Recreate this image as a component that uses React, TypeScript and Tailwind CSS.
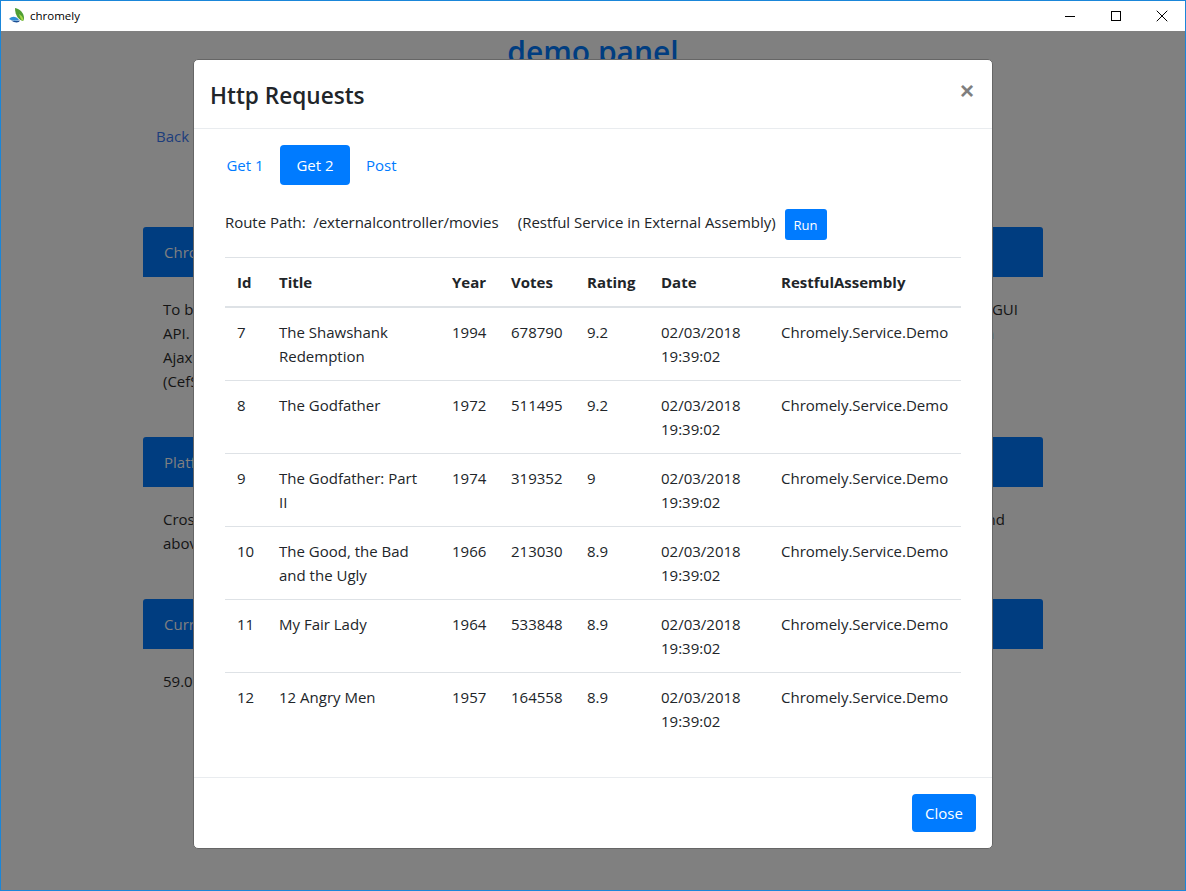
import { X } from "lucide-react";

const font = "font-['Open_Sans',sans-serif]";

const movies = [
  { id: 7, title: ["The Shawshank", "Redemption"], year: 1994, votes: 678790, rating: "9.2" },
  { id: 8, title: ["The Godfather"], year: 1972, votes: 511495, rating: "9.2" },
  { id: 9, title: ["The Godfather: Part", "II"], year: 1974, votes: 319352, rating: "9" },
  { id: 10, title: ["The Good, the Bad", "and the Ugly"], year: 1966, votes: 213030, rating: "8.9" },
  { id: 11, title: ["My Fair Lady"], year: 1964, votes: 533848, rating: "8.9" },
  { id: 12, title: ["12 Angry Men"], year: 1957, votes: 164558, rating: "8.9" },
];

function Logo() {
  return (
    <svg width="16" height="16" viewBox="0 0 16 16" className="shrink-0">
      <path d="M6 0 C11 1 15 5 15 10 C15 12 14 13 14 13 C10 12 6 8 6 0 Z" fill="#4f9e33" />
      <path d="M10 6 C13 8 15 10 14 13 C12 12 11 9 10 6 Z" fill="#a5d84a" />
      <path d="M0 11 C3 8 7 8 10 12 C7 13 3 13 0 11 Z" fill="#2f8fd8" />
      <path d="M2 12.5 C5 13 8 13 11 12.5 C10 15 6 15 2 12.5 Z" fill="#1c4f94" />
    </svg>
  );
}

function TitleBar() {
  return (
    <div className="flex h-[30px] items-center justify-between bg-white">
      <div className="flex items-center gap-[5px] pl-2">
        <Logo />
        <span className="font-['Open_Sans',sans-serif] text-[11.5px] text-black">chromely</span>
      </div>
      <div className="flex">
        <div className="flex h-[30px] w-[46px] items-center justify-center">
          <div className="h-px w-[10px] bg-black" />
        </div>
        <div className="flex h-[30px] w-[46px] items-center justify-center">
          <div className="h-[10px] w-[10px] border border-black" />
        </div>
        <div className="flex h-[30px] w-[46px] items-center justify-center">
          <X size={20} strokeWidth={1} color="#000" absoluteStrokeWidth />
        </div>
      </div>
    </div>
  );
}

type Line = { left: string; right: string; pr: string };

function Card({ title, lines, className }: { title: string; lines: Line[]; className: string }) {
  return (
    <div className={className}>
      <div className="flex h-[50px] items-center rounded-t-[3px] bg-[#003d80] pl-[21px] text-[15px] text-[#808080]">{title}</div>
      <div className="px-[20px] pt-[20px] text-[15px] leading-[24px] text-[#141414]">
        {lines.map((l) => (
          <div key={l.left} className={`flex justify-between ${l.pr}`}>
            <span>{l.left}</span>
            <span>{l.right}</span>
          </div>
        ))}
      </div>
    </div>
  );
}

function Page() {
  return (
    <div className={`h-[859px] overflow-hidden bg-[#808080] ${font}`}>
      <div className="mx-auto w-[900px]">
        <h1 className="pt-[1px] text-center text-[30px] font-semibold leading-[40px] text-[#003d80]">demo panel</h1>
        <a className="mt-[52px] block pl-[13px] text-[15px] leading-[24px] text-[#1c3d7c]">Back</a>
        <Card
          className="mt-[79px]"
          title="Chromely"
          lines={[
            { left: "To build", right: "GUI", pr: "pr-[5px]" },
            { left: "API.", right: "a", pr: "pr-[29px]" },
            { left: "Ajax", right: "", pr: "" },
            { left: "(CefSharp)", right: "", pr: "" },
          ]}
        />
        <Card
          className="mt-[44px]"
          title="Platforms"
          lines={[
            { left: "Cross", right: "nd", pr: "pr-[18px]" },
            { left: "above", right: "", pr: "" },
          ]}
        />
        <Card className="mt-[44px]" title="Current" lines={[{ left: "59.0.2", right: "", pr: "" }]} />
      </div>
    </div>
  );
}

function Modal() {
  const th = "border-b-2 border-[#dee2e6] px-3 pt-[12px] pb-[11px] text-left align-top font-bold";
  const td = "px-3 pt-[12px] pb-[12px] align-top";
  return (
    <div className={`w-[800px] rounded-[5px] border border-[#666666] bg-white text-[#212529] ${font}`}>
      <div className="flex h-[69px] items-start justify-between border-b border-[#e9ecef] pl-[16px] pr-[18px]">
        <h5 className="pt-[19px] text-[22.6px] font-semibold leading-[34px]">Http Requests</h5>
        <span className="pt-[13px] font-['Liberation_Sans',sans-serif] text-[24px] font-bold leading-[36px] text-[#7f7f7f]">×</span>
      </div>
      <div className="h-[648px] px-[16px] pt-[16px] text-[15px] leading-[24px]">
        <div className="flex h-[40px]">
          <a className="flex w-[70px] items-center justify-center text-[#007bff]">Get 1</a>
          <a className="flex w-[70px] items-center justify-center rounded-[4px] bg-[#007bff] text-white">Get 2</a>
          <a className="flex items-center px-4 text-[#007bff]">Post</a>
        </div>
        <div className="mx-[15px] mt-[24px] flex h-[31px] items-start">
          <span className="mt-px whitespace-pre tracking-[-0.04px]">Route Path:  /externalcontroller/movies     (Restful Service in External Assembly)</span>
          <button className="ml-[9px] h-[31px] w-[42px] rounded-[3px] bg-[#007bff] text-[13px] font-medium text-white">Run</button>
        </div>
        <table className="mx-[15px] mt-[17px] w-[736px] table-fixed border-collapse border-t border-[#dee2e6]">
          <colgroup>
            <col className="w-[42px]" />
            <col className="w-[173px]" />
            <col className="w-[59px]" />
            <col className="w-[76px]" />
            <col className="w-[74px]" />
            <col className="w-[120px]" />
            <col className="w-[192px]" />
          </colgroup>
          <thead>
            <tr className="h-[49px]">
              <th className={th}>Id</th>
              <th className={th}>Title</th>
              <th className={th}>Year</th>
              <th className={th}>Votes</th>
              <th className={th}>Rating</th>
              <th className={th}>Date</th>
              <th className={th}>RestfulAssembly</th>
            </tr>
          </thead>
          <tbody>
            {movies.map((m, i) => (
              <tr key={m.id} className={`h-[73px] ${i > 0 ? "border-t border-[#dee2e6]" : ""}`}>
                <td className={td}>{m.id}</td>
                <td className={td}>
                  {m.title.map((t) => (
                    <div key={t}>{t}</div>
                  ))}
                </td>
                <td className={td}>{m.year}</td>
                <td className={td}>{m.votes}</td>
                <td className={td}>{m.rating}</td>
                <td className={td}>
                  <div>02/03/2018</div>
                  <div>19:39:02</div>
                </td>
                <td className={`${td} whitespace-nowrap`}>Chromely.Service.Demo</td>
              </tr>
            ))}
          </tbody>
        </table>
      </div>
      <div className="flex h-[71px] items-center justify-end border-t border-[#e9ecef] pr-[16px]">
        <button className="h-[38px] w-[64px] rounded-[4px] bg-[#007bff] text-[15px] text-white">Close</button>
      </div>
    </div>
  );
}

export default function App() {
  return (
    <div className="relative h-[891px] w-[1186px] overflow-hidden border border-[#1a86d9]">
      <TitleBar />
      <Page />
      {/* modal over the dimmed page */}
      <div className="absolute inset-x-0 top-[30px] flex justify-center pt-[28px]">
        <Modal />
      </div>
    </div>
  );
}
